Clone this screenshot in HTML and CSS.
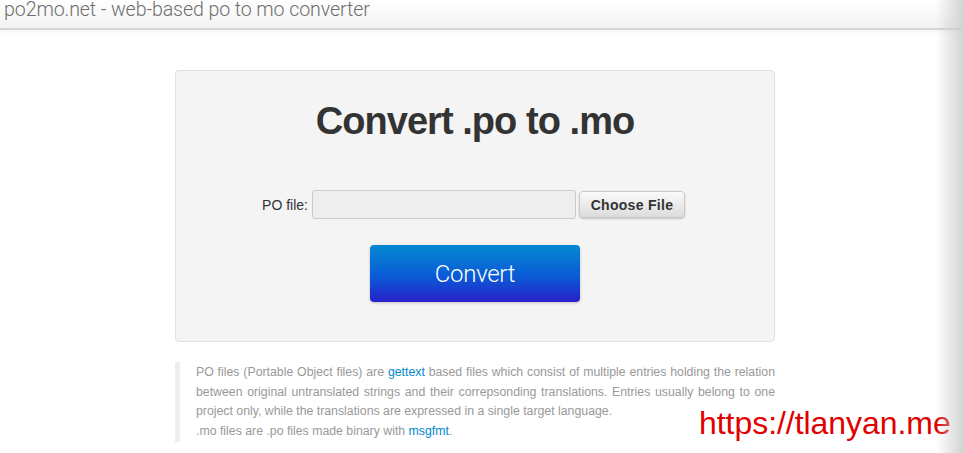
FILE: index.html
```html
<!DOCTYPE html>
<html lang="en">
<head>
  <meta charset="UTF-8" />
  <title>po2mo.net - web-based po to mo converter</title>
  <link rel="stylesheet" href="styles.css">
</head>
<body>

  <!-- BARRA DE TOPO -->
  <header class="navbar">
    <span class="brand">po2mo.net - web-based po to mo converter</span>
  </header>

  <main class="container">
    <!-- FORMULARIO -->
    <section class="well">
      <h1>Convert .po to .mo</h1>
      <form class="upload">
        <div class="file-row">
          <label>PO file:</label>
          <span class="file-box"></span>
          <span class="file-btn">Choose File</span>
        </div>
        <button type="button" class="btn-convert">Convert</button>
      </form>
    </section>

    <!-- EXPLICACAO -->
    <blockquote class="about">
      <p>PO files (Portable Object files) are <a href="#">gettext</a> based files which consist of multiple entries holding the relation between original untranslated strings and their correpsonding translations. Entries usually belong to one project only, while the translations are expressed in a single target language.<br>
      .mo files are .po files made binary with <a href="#">msgfmt</a>.</p>
    </blockquote>
  </main>

  <div class="watermark">https://tlanyan.me</div>
  <div class="edge-shade"></div>
</body>
</html>
```

FILE: styles.css
```css
:root {
  --text: #333;
  --muted: #999;
  --link: #0088cc;
}
* {
  box-sizing: border-box;
}
body {
  margin: 0;
  font-family: 'Liberation Sans', Arial, sans-serif;
  color: var(--text);
  background: #fff;
  height: 453px;
  overflow: hidden;
}

/* topo */
.navbar {
  height: 30px;
  background: linear-gradient(#fff, #f2f2f2);
  border-bottom: 2px solid #d4d4d4;
  box-shadow: 0 1px 6px rgba(0,0,0,0.06);
  overflow: hidden;
}
.brand {
  display: block;
  padding-left: 4px;
  margin-top: -3px;
  font-family: Roboto, 'Liberation Sans', sans-serif;
  font-weight: 300;
  font-size: 19.6px;
  line-height: 26px;
  letter-spacing: -0.1px;
  color: #6e6e6e;
}

.container {
  width: 600px;
  margin: 40px auto 0 175px;
}

/* caixa principal */
.well {
  height: 272px;
  background: #f4f4f4;
  border: 1px solid #e0e0e0;
  border-radius: 4px;
  padding-top: 27px;
}
.well h1 {
  margin: 0;
  text-align: center;
  font-size: 38px;
  line-height: 46px;
  letter-spacing: -0.95px;
  font-weight: bold;
  color: #333;
}
.upload {
  display: flex;
  flex-direction: column;
  align-items: center;
  margin-top: 46px;
}
.file-row {
  display: flex;
  align-items: center;
  margin-left: -3px;
}
.file-row label {
  font-size: 14px;
  color: #333;
  margin-right: 4px;
}
.file-box {
  width: 264px;
  height: 29px;
  background: #eee;
  border: 1px solid #ccc;
  border-radius: 3px;
}
.file-btn {
  margin-left: 3px;
  width: 106px;
  height: 27px;
  display: flex;
  align-items: center;
  justify-content: center;
  font-size: 14px;
  font-weight: bold;
  color: #333;
  letter-spacing: 0.3px;
  background: linear-gradient(#fafafa, #dcdcdc);
  border: 1px solid #c8c8c8;
  border-radius: 4px;
  box-shadow: 0 1px 2px rgba(0,0,0,0.2);
}
.btn-convert {
  margin-top: 26px;
  width: 210px;
  height: 57px;
  border: none;
  border-radius: 4px;
  background: linear-gradient(#0589d2, #0a5bd6 55%, #2820c8);
  box-shadow: 0 1px 3px rgba(0,0,0,0.2);
  color: #fff;
  font-family: Roboto, 'Liberation Sans', sans-serif;
  font-weight: 300;
  font-size: 24px;
  letter-spacing: -0.3px;
  padding: 0;
}

/* bloco de texto */
.about {
  margin: 20px 0 0;
  border-left: 5px solid #eee;
  padding: 1px 0 0 16px;
}
.about p {
  margin: 0;
  font-size: 12.3px;
  line-height: 19.7px;
  color: var(--muted);
  text-align: justify;
}
.about a {
  color: var(--link);
  text-decoration: none;
}

/* marca d'agua */
.watermark {
  position: absolute;
  left: 699px;
  top: 405px;
  font-size: 32px;
  color: #e00000;
  letter-spacing: -0.05px;
}
.edge-shade {
  position: absolute;
  top: 0;
  right: 0;
  width: 28px;
  height: 453px;
  background: linear-gradient(to right, rgba(220,220,220,0), rgba(205,205,205,0.9));
}
```
